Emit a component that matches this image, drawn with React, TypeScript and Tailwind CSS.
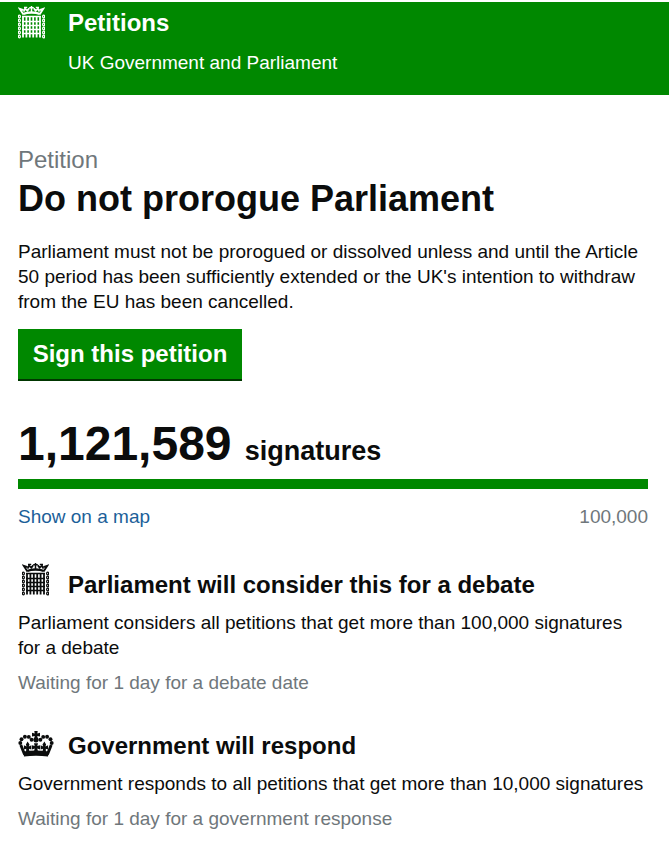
import type { ReactNode } from 'react';

interface IconProps {
  className?: string;
}

function PortcullisIcon({ className }: IconProps) {
  const chain = [10.5, 14.5, 18.5, 22.5, 26.5, 30.5];

  return (
    <svg viewBox="0 0 27 33" className={className} fill="none" stroke="currentColor" aria-hidden="true">
      {/* Crown */}
      <path d="M5.2 8C9.5 6 17.5 6 21.8 8" strokeWidth="2.4" />
      <path d="M5.4 8.4L1.8 2.8L5.6 4M21.6 8.4L25.2 2.8L21.4 4" strokeWidth="1.8" />
      <path d="M5.6 5.6L7 2.6L9.4 4.8L11.2 2.2M21.4 5.6L20 2.6L17.6 4.8L15.8 2.2" strokeWidth="1.7" />
      <path d="M13.5 0V6M11.2 1.7H15.8M6 1.4H9.2M17.8 1.4H21" strokeWidth="1.5" />
      {/* Gate */}
      <path d="M4 10.5H23M4 15.5H23M4 19.5H23M4 23.5H23M4 27.5H23" strokeWidth="1.4" />
      <path d="M5 10V31.5M8.4 10V31.5M11.8 10V31.5M15.2 10V31.5M18.6 10V31.5M22 10V31.5" strokeWidth="1.8" />
      {/* Chains */}
      {chain.map((y) => (
        <g key={y} strokeWidth="1.2">
          <ellipse cx="1.4" cy={y} rx="1" ry="1.4" />
          <ellipse cx="25.6" cy={y} rx="1" ry="1.4" />
        </g>
      ))}
    </svg>
  );
}

function CrownIcon({ className }: IconProps) {
  const pearls = [
    [2.3, 12], [3.5, 8.3], [6.9, 5.8], [10.8, 5.9], [13.6, 8.7],
    [33.7, 12], [32.5, 8.3], [29.1, 5.8], [25.2, 5.9], [22.4, 8.7]
  ];

  return (
    <svg viewBox="0 0 36 26" className={className} fill="currentColor" aria-hidden="true">
      {pearls.map(([x, y]) => (
        <circle key={`${x}-${y}`} cx={x} cy={y} r="1.95" />
      ))}
      {/* Orb and cross */}
      <path d="M16.3 0H19.7L19.3 2.4L22 1.8V5.6L19.3 5L19.6 7H16.4L16.7 5L14 5.6V1.8L16.7 2.4Z" />
      <circle cx="18" cy="8.8" r="2.6" />
      {/* Sides and band */}
      <path d="M2.8 14L6.6 23.5M33.2 14L29.4 23.5" fill="none" stroke="currentColor" strokeWidth="2.9" />
      <path d="M5.2 20.6Q18 18.6 30.8 20.6L30 25.6Q18 23.8 6 25.6Z" />
      {/* Fleurs and centre cross */}
      <path d="M9.6 10.6L11.5 13.6L10.8 15.4L13.4 14.2V18.6L11 17.8L11.4 21H8.1L8.2 17.8L6 18.4L5.9 14.2L8.6 15.4L7.9 13.6Z" />
      <path d="M26.4 10.6L24.5 13.6L25.2 15.4L22.6 14.2V18.6L25 17.8L24.6 21H27.9L27.8 17.8L30 18.4L30.1 14.2L27.4 15.4L28.1 13.6Z" />
      <path d="M16 12.2H20L19.3 15L22 14.2V18.4L19.3 17.6L20 20.5H16L16.7 17.6L14 18.4V14.2L16.7 15Z" />
    </svg>
  );
}

interface ThresholdProps {
  icon: ReactNode;
  title: string;
  status: string;
  children: ReactNode;
}

function Threshold({ icon, title, status, children }: ThresholdProps) {
  return (
    <section>
      <div className="flex h-[35px]">
        <div className="w-[50px] shrink-0">{icon}</div>
        <h2 className="pt-[7px] text-[24px] leading-[30px] font-bold">{title}</h2>
      </div>
      <p className="mt-[12px]">{children}</p>
      <p className="mt-[10px] text-[#6f777b]">{status}</p>
    </section>
  );
}

export default function App() {
  return (
    <div className="h-[853px] overflow-hidden bg-white font-['Liberation_Sans',Arial,sans-serif] text-[19px] leading-[25px] text-[#0b0c0c]">
      {/* Header */}
      <header className="mt-[2px] flex h-[93px] bg-[#008800] pl-[18px] text-white">
        <PortcullisIcon className="mt-[4px] h-[33px] w-[27px]" />
        <div className="pl-[23px]">
          <p className="pt-[6px] text-[24px] leading-[30px] font-bold">Petitions</p>
          <p className="mt-[12px]">UK Government and Parliament</p>
        </div>
      </header>

      <main className="px-[18px] pt-[50px]">
        <h1>
          <span className="block text-[24px] leading-[30px] text-[#6f777b]">Petition</span>
          <span className="block pt-[4px] text-[36px] leading-[40px] font-bold">Do not prorogue Parliament</span>
        </h1>
        <p className="mt-[20px]">
          Parliament must not be prorogued or dissolved unless and until the Article
          <br />
          50 period has been sufficiently extended or the UK's intention to withdraw
          <br />
          from the EU has been cancelled.
        </p>
        <button className="mt-[15px] block h-[52px] w-[224px] border-b-2 border-[#003600] bg-[#008800] text-[24px] leading-[50px] font-bold whitespace-nowrap text-white">
          Sign this petition
        </button>

        {/* Signature count */}
        <p className="mt-[33px] h-[65px] leading-[60px] font-bold whitespace-nowrap">
          <span className="text-[48px]">1,121,589</span>{' '}
          <span className="ml-[8px] text-[27px]">signatures</span>
        </p>
        <div className="mr-[3px] h-[10px] bg-[#008800]"></div>
        <div className="mt-[15px] mr-[3px] flex justify-between">
          <a href="#" className="text-[#1c5f99]">Show on a map</a>
          <span className="text-[#6f777b]">100,000</span>
        </div>

        {/* Thresholds */}
        <div className="mt-[34px] space-y-[29px]">
          <Threshold
            icon={<PortcullisIcon className="ml-[4px] h-[33px] w-[27px]" />}
            title="Parliament will consider this for a debate"
            status="Waiting for 1 day for a debate date"
          >
            Parliament considers all petitions that get more than 100,000 signatures
            <br />
            for a debate
          </Threshold>
          <Threshold
            icon={<CrownIcon className="mt-[7px] h-[26px] w-[36px]" />}
            title="Government will respond"
            status="Waiting for 1 day for a government response"
          >
            Government responds to all petitions that get more than 10,000 signatures
          </Threshold>
        </div>
      </main>
    </div>
  );
}
